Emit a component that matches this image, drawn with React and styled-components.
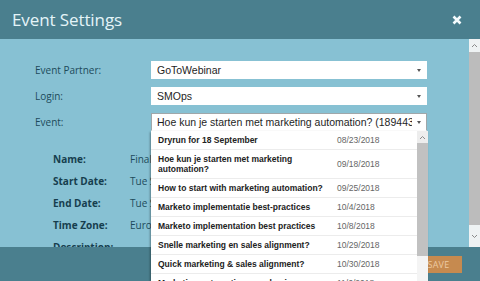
import styled, { createGlobalStyle } from 'styled-components'

const GlobalStyle = createGlobalStyle`
  html, body {
    margin: 0;
    padding: 0;
    overflow: hidden;
  }
  body {
    font-family: 'Open Sans', 'Liberation Sans', sans-serif;
  }
`

const selects = [
  { label: 'Event Partner:', value: 'GoToWebinar' },
  { label: 'Login:', value: 'SMOps' },
  { label: 'Event:', value: 'Hoe kun je starten met marketing automation? (189443451)', open: true },
]

const details = [
  { label: 'Name:', value: 'Finale webinar' },
  { label: 'Start Date:', value: 'Tue Sep 18 2018 15:00' },
  { label: 'End Date:', value: 'Tue Sep 18 2018 16:00' },
  { label: 'Time Zone:', value: 'Europe/Amsterdam' },
  { label: 'Description:', value: '' },
]

const events = [
  { name: 'Dryrun for 18 September', date: '08/23/2018' },
  { name: 'Hoe kun je starten met marketing automation?', date: '09/18/2018' },
  { name: 'How to start with marketing automation?', date: '09/25/2018' },
  { name: 'Marketo implementatie best-practices', date: '10/4/2018' },
  { name: 'Marketo implementation best practices', date: '10/8/2018' },
  { name: 'Snelle marketing en sales alignment?', date: '10/29/2018' },
  { name: 'Quick marketing & sales alignment?', date: '10/30/2018' },
  { name: 'Marketing automation voor beginners', date: '11/6/2018' },
]

const Caret = ({ up }) => (
  <svg width="7" height="5" viewBox="0 0 7 5">
    <path
      d={up ? 'M1 4 L3.5 1.5 L6 4' : 'M1 1 L3.5 3.5 L6 1'}
      fill="none"
      stroke="#8a8a8a"
      strokeWidth="1"
    />
  </svg>
)

export default function App() {
  return (
    <>
      <GlobalStyle />
      <Dialog>
        <Header>
          <Title>Event Settings</Title>
          <CloseButton>
            <svg width="10" height="10" viewBox="0 0 10 10">
              <path d="M1.5 1.5 L8.5 8.5 M8.5 1.5 L1.5 8.5" stroke="#f4fbfd" strokeWidth="2.6" />
            </svg>
          </CloseButton>
        </Header>

        <Main>
          <Content>
            <FormGrid>
              {selects.map(({ label, value, open }) => (
                <FormRow key={label}>
                  <FieldLabel>{label}</FieldLabel>
                  <Select $open={open}>
                    <SelectText>{value}</SelectText>
                    <SelectArrow />
                  </Select>
                </FormRow>
              ))}
            </FormGrid>
            <DetailGrid>
              {details.map(({ label, value }) => (
                <DetailRow key={label}>
                  <DetailLabel>{label}</DetailLabel>
                  <DetailValue>{value}</DetailValue>
                </DetailRow>
              ))}
            </DetailGrid>
          </Content>
          <Scrollbar>
            <ScrollButton $height={13}>
              <Caret up />
            </ScrollButton>
            <ScrollTrack />
            <ScrollButton $height={22}>
              <Caret />
            </ScrollButton>
          </Scrollbar>
        </Main>

        <Footer>
          <SaveButton>SAVE</SaveButton>
        </Footer>

        <EventMenu>
          <EventList>
            {events.map(event => (
              <EventItem key={event.name}>
                <EventName>{event.name}</EventName>
                <EventDate>{event.date}</EventDate>
              </EventItem>
            ))}
          </EventList>
          <MenuScrollbar>
            <MenuScrollButton>
              <Caret up />
            </MenuScrollButton>
            <MenuThumb />
          </MenuScrollbar>
        </EventMenu>
      </Dialog>
    </>
  )
}

const Dialog = styled.div`
  position: relative;
  display: flex;
  flex-direction: column;
  width: 480px;
  height: 281px;
  overflow: hidden;
`

const Header = styled.div`
  display: flex;
  align-items: center;
  justify-content: space-between;
  height: 39px;
  padding: 0 18px 0 12px;
  box-sizing: border-box;
  background: #4a7f8e;
  flex-shrink: 0;
`

const Title = styled.div`
  color: #e4f4f8;
  font-size: 17px;
  letter-spacing: -0.1px;
  margin-top: -1px;
`

const CloseButton = styled.div`
  display: flex;
  margin-top: 1px;
`

const Main = styled.div`
  display: flex;
  height: 208px;
  background: #87c1d3;
  overflow: hidden;
  flex-shrink: 0;
`

const Content = styled.div`
  flex: 1;
  padding-top: 22px;
`

const FormGrid = styled.div`
  display: flex;
  flex-direction: column;
  gap: 8px;
  padding-left: 35px;
`

const FormRow = styled.div`
  display: grid;
  grid-template-columns: 116px 276px;
  align-items: center;
`

const FieldLabel = styled.div`
  font-size: 10px;
  color: #1d4b5b;
`

const Select = styled.div`
  display: flex;
  align-items: center;
  height: 18px;
  box-sizing: border-box;
  padding: 0 5px 0 5px;
  background: #fff;
  border: 1px solid ${({ $open }) => ($open ? '#9fa7aa' : '#fff')};
  border-bottom-color: #fff;
  gap: 5px;
`

const SelectText = styled.div`
  flex: 1;
  font-family: 'Liberation Sans', Arial, sans-serif;
  font-size: 10.5px;
  color: #1e1e1e;
  white-space: nowrap;
  overflow: hidden;
`

const SelectArrow = styled.div`
  width: 0;
  height: 0;
  border-left: 2.5px solid transparent;
  border-right: 2.5px solid transparent;
  border-top: 3px solid #555;
`

const DetailGrid = styled.div`
  display: flex;
  flex-direction: column;
  margin-top: 17px;
  padding-left: 53px;
`

const DetailRow = styled.div`
  display: grid;
  grid-template-columns: 77px 1fr;
  align-items: center;
  height: 22px;
`

const DetailLabel = styled.div`
  font-size: 10px;
  font-weight: 700;
  color: #163e4e;
`

const DetailValue = styled.div`
  font-size: 10px;
  color: #1d4b5b;
  white-space: nowrap;
`

const Scrollbar = styled.div`
  display: flex;
  flex-direction: column;
  width: 11px;
  background: #bcbcbc;
`

const ScrollButton = styled.div`
  display: flex;
  align-items: center;
  justify-content: center;
  height: ${({ $height }) => $height}px;
  background: #eef2f3;
`

const ScrollTrack = styled.div`
  flex: 1;
`

const Footer = styled.div`
  display: flex;
  justify-content: flex-end;
  align-items: flex-start;
  flex: 1;
  padding: 9px 18px 0 0;
  background: #4a7f8e;
`

const SaveButton = styled.div`
  width: 47px;
  height: 17px;
  display: flex;
  align-items: center;
  justify-content: center;
  background: #c68a4f;
  color: #ecc9a2;
  font-size: 9px;
  letter-spacing: 0.3px;
`

const EventMenu = styled.div`
  position: absolute;
  top: 131px;
  left: 151px;
  width: 277px;
  bottom: 0;
  display: flex;
  background: #fff;
  box-shadow: -1px 1px 2px rgba(0, 0, 0, 0.35);
  overflow: hidden;
`

const EventList = styled.div`
  flex: 1;
  display: flex;
  flex-direction: column;
`

const EventItem = styled.div`
  display: grid;
  grid-template-columns: 179px 1fr;
  align-items: center;
  padding: 4px 0 4px 7px;
  border-bottom: 1px solid #ececec;
  flex-shrink: 0;
`

const EventName = styled.div`
  font-family: 'Liberation Sans', Arial, sans-serif;
  font-size: 8.5px;
  font-weight: 700;
  line-height: 10px;
  color: #222;
  padding-right: 8px;
`

const EventDate = styled.div`
  font-family: 'Liberation Sans', Arial, sans-serif;
  font-size: 8.5px;
  line-height: 10px;
  color: #666;
`

const MenuScrollbar = styled.div`
  display: flex;
  flex-direction: column;
  width: 11px;
  background: #f4f4f4;
`

const MenuScrollButton = styled.div`
  display: flex;
  align-items: center;
  justify-content: center;
  height: 12px;
  background: #ededed;
`

const MenuThumb = styled.div`
  height: 113px;
  background: #c1c1c1;
`
